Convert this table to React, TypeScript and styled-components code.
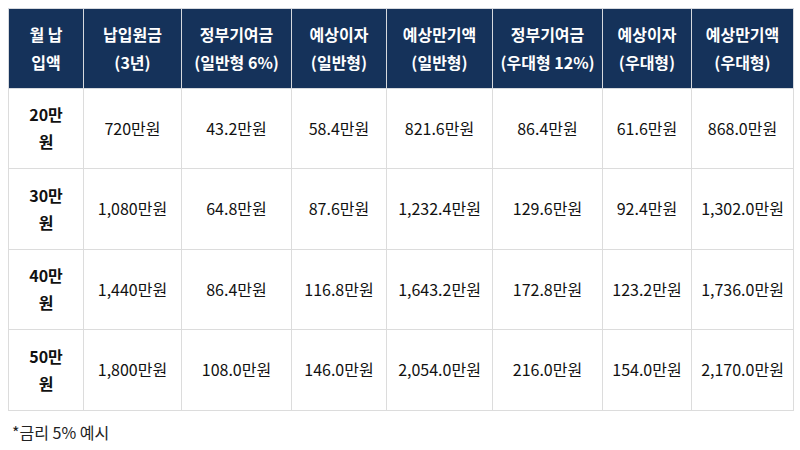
import React from "react";
import styled, { createGlobalStyle } from "styled-components";

const Global = createGlobalStyle`
  html, body { margin: 0; padding: 0; background: #ffffff; }
  body { padding: 8px; font-family: "Noto Sans CJK KR", "Noto Sans", sans-serif; color: #111; }
`;

const Table = styled.table`
  width: 785px;
  border-collapse: collapse;
  table-layout: fixed;
  font-size: 16px;
`;

const HeadCell = styled.th`
  background: #15325a;
  color: #ffffff;
  font-weight: 700;
  line-height: 28px;
  height: 78.5px;
  padding: 0 2px;
  text-align: center;
  vertical-align: middle;
  border: 1.5px solid #d6d9de;
`;

const Cell = styled.td<{ $bold?: boolean }>`
  height: 79.5px;
  padding: 0 2px;
  text-align: center;
  vertical-align: middle;
  line-height: 27px;
  border: 1.5px solid #dcdcdc;
  font-weight: ${(p) => (p.$bold ? 700 : 400)};
  color: #111;
`;

const Note = styled.p`
  margin: 9px 0 0 4px;
  font-size: 16px;
  color: #222;
`;

const widths = [75, 98, 110, 95, 106, 110, 89, 102];

const headers: [string, string][] = [
  ["월 납", "입액"],
  ["납입원금", "(3년)"],
  ["정부기여금", "(일반형 6%)"],
  ["예상이자", "(일반형)"],
  ["예상만기액", "(일반형)"],
  ["정부기여금", "(우대형 12%)"],
  ["예상이자", "(우대형)"],
  ["예상만기액", "(우대형)"],
];

const rows: string[][] = [
  ["20만", "720만원", "43.2만원", "58.4만원", "821.6만원", "86.4만원", "61.6만원", "868.0만원"],
  ["30만", "1,080만원", "64.8만원", "87.6만원", "1,232.4만원", "129.6만원", "92.4만원", "1,302.0만원"],
  ["40만", "1,440만원", "86.4만원", "116.8만원", "1,643.2만원", "172.8만원", "123.2만원", "1,736.0만원"],
  ["50만", "1,800만원", "108.0만원", "146.0만원", "2,054.0만원", "216.0만원", "154.0만원", "2,170.0만원"],
];

export default function App() {
  return (
    <>
      <Global />
      <Table>
        <colgroup>
          {widths.map((w, i) => (
            <col key={i} style={{ width: w }} />
          ))}
        </colgroup>
        <thead>
          <tr>
            {headers.map(([a, b], i) => (
              <HeadCell key={i}>
                {a}
                <br />
                {b}
              </HeadCell>
            ))}
          </tr>
        </thead>
        <tbody>
          {rows.map((r, ri) => (
            <tr key={ri}>
              <Cell $bold>
                {r[0]}
                <br />원
              </Cell>
              {r.slice(1).map((v, ci) => (
                <Cell key={ci}>{v}</Cell>
              ))}
            </tr>
          ))}
        </tbody>
      </Table>
      <Note>*금리 5% 예시</Note>
    </>
  );
}
